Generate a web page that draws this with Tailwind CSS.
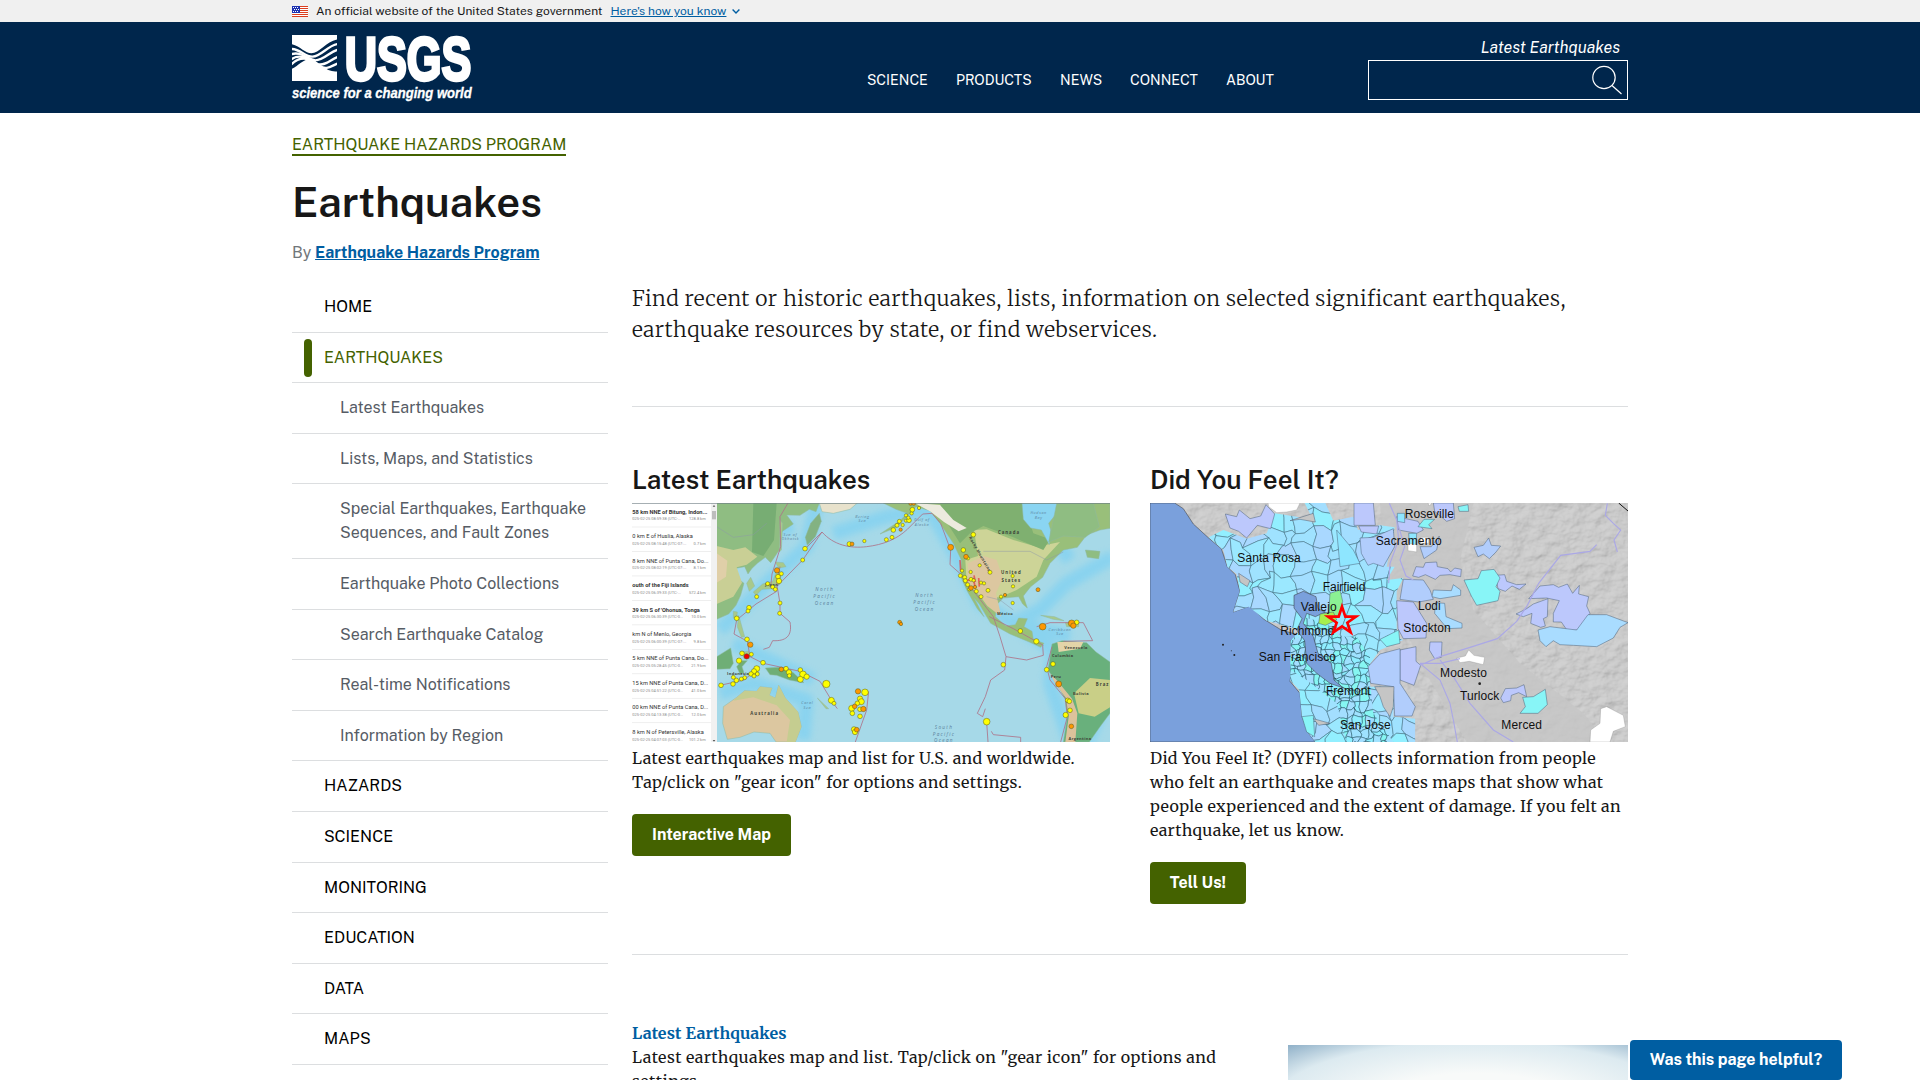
<!DOCTYPE html>
<html lang="en">
<head>
<meta charset="utf-8">
<title>Earthquakes | U.S. Geological Survey</title>
<script src="https://cdn.jsdelivr.net/npm/@tailwindcss/browser@4"></script>
</head>
<body class="h-[1080px] overflow-hidden bg-white font-['Public_Sans',Inter,sans-serif] text-[16px] leading-6 text-[#171717]">

<div class="h-[22px] bg-[#f0f0f0]">
  <div class="mx-auto flex h-full w-[1336px] items-center text-[12px] leading-[22px]">
    <svg class="h-[11px] w-4" viewBox="0 0 16 11"><rect width="16" height="11" fill="#fff"/><path d="M0 .5h16M0 2.5h16M0 4.5h16M0 6.5h16M0 8.5h16M0 10.5h16" stroke="#db3e1f"/><rect width="8" height="7" fill="#1e33b1"/><path d="M1 1.5h6M2 3.5h5M1 5.5h6" stroke="#fff" stroke-dasharray="1 1"/></svg>
    <span class="ml-2">An official website of the United States government</span>
    <a class="ml-2 text-[#005ea2] underline">Here's how you know</a>
    <svg class="ml-1.5 h-2 w-2" viewBox="0 0 8 8" fill="none" stroke="#005ea2" stroke-width="1.4"><path d="M.6 2.6 4 6l3.4-3.4"/></svg>
  </div>
</div>

<header class="h-[91px] bg-[#00264c] text-white">
  <div class="mx-auto flex h-full w-[1336px]">
    <svg class="mt-3 h-[68px] w-[181px] shrink-0 overflow-visible" viewBox="36 102 543 204">
      <clipPath id="mark"><rect x="36" y="105" width="135" height="138"/></clipPath>
      <g clip-path="url(#mark)">
        <rect x="36" y="105" width="135" height="138" fill="#fff"/>
        <path d="M34 132C60 138 76 160 94 160 118 160 140 122 174 118L174 214C140 220 118 186 92 178 70 176 56 198 34 207Z" fill="#00264c"/>
        <g fill="none" stroke="#fff" stroke-width="7">
          <path d="M34 147C62 147 76 172 98 170 124 168 144 136 174 132"/>
          <path d="M34 163C62 152 84 180 106 181 132 181 150 154 174 149"/>
          <path d="M34 178C60 160 84 176 112 192 136 200 154 176 174 171"/>
          <path d="M34 193C60 168 88 170 118 197 140 214 156 196 174 190"/>
        </g>
      </g>
      <text x="194" y="239" fill="#fff" stroke="#fff" stroke-width="10" font-family="Liberation Sans, sans-serif" font-weight="700" font-size="186" textLength="380" lengthAdjust="spacingAndGlyphs">USGS</text>
      <text x="36" y="293" fill="#fff" stroke="#fff" stroke-width="1" font-family="Liberation Sans, sans-serif" font-weight="700" font-style="italic" font-size="45" textLength="539" lengthAdjust="spacingAndGlyphs">science for a changing world</text>
    </svg>
    <nav class="ml-[394px] flex gap-7 pt-[46px] text-[14.1px] leading-6">
      <a class="w-[61px]">SCIENCE</a><a class="w-[76px]">PRODUCTS</a><a class="w-[42px]">NEWS</a><a class="w-[68px]">CONNECT</a><a>ABOUT</a>
    </nav>
    <div class="ml-auto w-[260px] pt-[14px]">
      <div class="pr-2 text-right text-[16px] leading-6 italic">Latest Earthquakes</div>
      <div class="flex h-10 justify-end border border-white pt-1 pr-[5px]">
        <svg class="h-[30px] w-[30px]" viewBox="0 0 30 30" fill="none" stroke="#fff" stroke-width="1.2"><circle cx="12" cy="12.5" r="11.2"/><path d="m20 20.500 9.500 8.500"/></svg>
      </div>
    </div>
  </div>
</header>

<main class="mx-auto w-[1336px]">
  <div class="pt-5"><a class="inline-block h-[23px] border-b-2 border-[#446200] text-[#446200]">EARTHQUAKE HAZARDS PROGRAM</a></div>
  <h1 class="mt-4 h-[58px] text-[42px] leading-[58px] font-semibold">Earthquakes</h1>
  <p class="mt-2.5 text-[#71767a]">By <a class="font-bold text-[#005ea2] underline">Earthquake Hazards Program</a></p>

  <div class="mt-[17px] flex gap-6">
    <ul class="w-[316px] shrink-0 text-black">
      <li class="h-[50.6px] border-b border-[#dcdee0] py-[13px] pl-8">HOME</li>
      <li class="flex h-[50.6px] border-b border-[#dcdee0] pl-3 text-[#446200]"><span class="mt-1.5 mr-3 h-[38px] w-2 rounded-full bg-[#446200]"></span><span class="py-[13px]">EARTHQUAKES</span></li>
      <li class="h-[50.6px] border-b border-[#dcdee0] py-[13px] pl-12 text-[#565c65]">Latest Earthquakes</li>
      <li class="h-[50.6px] border-b border-[#dcdee0] py-[13px] pl-12 text-[#565c65]">Lists, Maps, and Statistics</li>
      <li class="h-[74.600px] border-b border-[#dcdee0] py-[13px] pl-12 text-[#565c65]">Special Earthquakes, Earthquake<br>Sequences, and Fault Zones</li>
      <li class="h-[50.6px] border-b border-[#dcdee0] py-[13px] pl-12 text-[#565c65]">Earthquake Photo Collections</li>
      <li class="h-[50.6px] border-b border-[#dcdee0] py-[13px] pl-12 text-[#565c65]">Search Earthquake Catalog</li>
      <li class="h-[50.6px] border-b border-[#dcdee0] py-[13px] pl-12 text-[#565c65]">Real-time Notifications</li>
      <li class="h-[50.6px] border-b border-[#dcdee0] py-[13px] pl-12 text-[#565c65]">Information by Region</li>
      <li class="h-[50.6px] border-b border-[#dcdee0] py-[13px] pl-8">HAZARDS</li>
      <li class="h-[50.6px] border-b border-[#dcdee0] py-[13px] pl-8">SCIENCE</li>
      <li class="h-[50.6px] border-b border-[#dcdee0] py-[13px] pl-8">MONITORING</li>
      <li class="h-[50.6px] border-b border-[#dcdee0] py-[13px] pl-8">EDUCATION</li>
      <li class="h-[50.6px] border-b border-[#dcdee0] py-[13px] pl-8">DATA</li>
      <li class="h-[50.6px] border-b border-[#dcdee0] py-[13px] pl-8">MAPS</li>
    </ul>

    <div class="w-[996px] shrink-0 pt-px font-['Merriweather','Noto_Serif','DejaVu_Serif_Condensed',serif]">
      <p class="h-[124px] border-b border-[#dcdee0] text-[21.12px] leading-[31px] font-light tracking-[0.46px] whitespace-nowrap">Find recent or historic earthquakes, lists, information on selected significant earthquakes,<br>earthquake resources by state, or find webservices.</p>

      <div class="flex h-[548px] gap-10 border-b border-[#dcdee0] pt-[56px]">
        <section class="w-[478px]">
          <h2 class="h-10 font-['Public_Sans',Inter,sans-serif] text-[26px] leading-[34px] font-semibold">Latest Earthquakes</h2>
          <svg id="quakes" class="block h-[239px] w-[478px]" viewBox="36 159 1434 717" preserveAspectRatio="none">
            <defs><filter id="soft"><feGaussianBlur stdDeviation="9"/></filter></defs>
            <rect x="36" y="159" width="1434" height="717" fill="#a6d9e8"/>
            <g fill="none" stroke="#83d2f1" stroke-width="42" opacity=".8" filter="url(#soft)" stroke-linejoin="round">
              <path d="M590 160 560 290 450 390 350 490 300 540M460 240 520 230M640 250 800 200 930 180 1010 320 1080 460 1220 545 1300 600 1290 700 1350 876M1480 320 1340 400 1260 480 1180 520 1350 560M300 730 400 700 560 750 550 870M340 580 470 640 580 690M1240 160 1290 250 1350 330M1480 700 1400 876"/>
            </g>
            <g stroke="#8fb9a0" stroke-width="1.500">
              <path fill="#8fbd82" d="M290 159H598L588 185 568 178 540 196 500 195 520 222 484 246 478 300 452 338 436 322 412 340 395 356 384 372 374 350 342 356 352 384 372 400 362 436 348 466 326 492 290 508Z"/>
              <path fill="#c9cf95" stroke="none" d="M290 288 340 300 376 292 412 320 380 344 350 352 366 398 340 440 290 462Z"/>
              <path fill="#e0cfa8" stroke="none" d="M290 310 322 332 318 380 290 398Z"/>
              <path fill="#77ad73" stroke="none" d="M400 159 470 159 462 270 430 318 396 306Z"/>
              <path fill="#e8e2cc" d="M598 159 606 185 640 190 690 178 712 159Z"/>
              <path fill="#83b282" d="M598 190 604 214 586 260 562 286 556 262 572 220Z"/>
              <path fill="#a8c98b" d="M480 210 488 220 484 300 478 306ZM466 336 490 338 498 350 476 354ZM470 362 482 380 478 404 452 416 426 418 408 436 400 426 428 402 458 394ZM392 382 404 408 388 424 380 400ZM340 484 352 486 350 506 340 504Z"/>
              <path fill="#99bf7a" d="M790 159H1470V235L1440 240 1400 255 1372 292 1330 300 1290 340 1268 382 1232 410 1210 438 1222 474 1208 462 1196 440 1150 444 1130 464 1126 500 1158 528 1186 524 1196 504 1222 506 1212 530 1236 544 1240 568 1272 580 1262 592 1228 576 1170 552 1112 520 1078 462 1062 444 1092 500 1072 476 1042 424 1022 380 1024 330 1000 280 960 220 930 182 888 170 870 190 830 232 780 252 840 212 862 190 828 178Z"/>
              <path fill="#cdd497" stroke="none" d="M1062 240 1100 238 1180 270 1250 290 1320 276 1270 330 1250 380 1190 420 1140 442 1086 444 1040 400 1036 330 1074 318Z"/>
              <path fill="#dcc7a0" stroke="none" d="M1044 340 1090 318 1130 330 1148 384 1128 430 1144 500 1102 468 1074 430 1044 400Z"/>
              <path fill="#7fb070" stroke="none" d="M960 159H1210L1240 250 1290 268 1270 300 1180 262 1090 228 1050 250 1020 280 970 200Z"/>
              <path fill="#eceade" stroke="none" d="M884 159 960 165 1000 210 1040 234 1016 244 972 216 930 184ZM1310 166 1340 178 1350 210 1330 224Z"/>
              <path fill="#8ad5f2" d="M1206 160 1210 208 1232 234 1264 240 1288 284 1292 240 1286 220 1310 190 1316 160Z"/>
              <path fill="#8fbd82" d="M1310 160 1420 160 1438 230 1396 262 1330 258 1286 276 1298 220ZM1396 300 1440 304 1436 326 1402 322Z"/>
              <path fill="#a8c98b" d="M1262 496 1304 500 1332 512 1300 508ZM1336 518 1376 518 1376 530 1340 530Z"/>
              <path fill="#69b07c" d="M1296 582 1326 572 1400 578 1428 606 1470 636V790L1440 830 1408 876H1330L1342 800 1336 748 1310 700 1284 660Z"/>
              <path fill="#c9cf87" stroke="none" d="M1410 684 1470 690V772L1424 800 1376 790 1362 730Z"/>
              <path fill="#dcc29b" stroke="none" d="M1290 670 1310 690 1356 746 1372 790 1366 876H1336L1346 800 1338 744 1306 702Z"/>
              <path fill="#e3d4a8" stroke="none" d="M1312 576 1390 576 1380 596 1316 606Z"/>
              <path fill="#6fae76" d="M290 620 332 594 340 640 330 656 290 658ZM436 654 480 652 520 668 552 698 508 690 470 676 450 674ZM350 650 364 632 382 632 366 650 372 668 360 672Z"/>
              <path fill="#a8c98b" d="M356 496 374 560 364 562 352 530ZM366 606 386 604 388 626 372 626ZM592 744 626 776 618 776Z"/>
              <path fill="#dcc7a0" d="M310 770 350 742 374 722 410 724 420 710 456 714 448 736 466 744 476 706 496 744 534 786 544 830 526 876H468L450 850 402 846 360 862 322 868 308 820Z"/>
              <path fill="#c5cd90" stroke="none" d="M374 722 410 724 420 710 456 714 448 736 466 744 476 706 496 744 534 786 544 830 526 876H500L510 810 470 766 400 742 340 752Z"/>
            </g>
            <g fill="none" stroke="#8d98a8" stroke-width="2" opacity=".7"><path d="M1090 304H1230L1280 330 1330 306M1100 440 1140 450 1180 480M290 230 340 262 400 254 440 220"/></g>
            <g fill="none" stroke="#ad7288" stroke-width="2.500">
              <path d="M504 159 480 200 482 290 456 372 452 412M556 296 606 246C640 285 690 296 740 290S830 268 862 238L908 192 936 190 962 220 992 300 990 344 1022 372 1066 430 1120 500 1140 560 1158 620 1154 660 1112 690 1096 740 1072 790 1088 800 1096 776M1158 620 1220 630 1270 616 1268 586M1108 500 1180 536 1270 586M1250 530 1290 518 1390 518 1418 572 1330 574M1296 590 1280 650 1290 690 1336 746 1342 800 1322 876M606 246 548 330 470 410M480 350 470 400 480 460 480 490 510 516C518 560 496 574 458 572L448 592 430 598M470 424 408 462 350 510 342 552 382 574 390 620 430 640 540 664 600 694 640 760 652 776M300 706 372 690 420 650M746 724 740 780 706 876M1100 816 1104 876M1114 844 1120 854 1202 862V876"/>
              <path stroke="#e23a3a" stroke-width="5" d="M1020 330 1022 364M1040 392 1060 386 1066 414M1062 376 1066 396M1076 384 1078 410" opacity=".7"/>
            </g>
            <g font-family="Open Sans, sans-serif" font-size="14" fill="#5b7f9b" text-anchor="middle" letter-spacing="4" font-style="italic">
              <text x="614" y="424">North</text><text x="614" y="445">Pacific</text><text x="614" y="466">Ocean</text>
              <text x="914" y="441">North</text><text x="914" y="462">Pacific</text><text x="914" y="483">Ocean</text>
              <text x="972" y="838">South</text><text x="972" y="858">Pacific</text><text x="972" y="876">Ocean</text>
              <g font-size="11" letter-spacing="2"><text x="727" y="203">Bering</text><text x="727" y="217">Sea</text><text x="511" y="258">Sea of</text><text x="511" y="271">Okhotsk</text><text x="906" y="214">Gulf of</text><text x="906" y="228">Alaska</text><text x="1256" y="193">Hudson</text><text x="1256" y="207">Bay</text><text x="1320" y="543">Caribbean</text><text x="1320" y="556">Sea</text><text x="562" y="763">Coral</text><text x="562" y="777">Sea</text></g>
            </g>
            <g font-family="Open Sans, sans-serif" font-size="13" font-weight="700" fill="#3d4438" text-anchor="middle" letter-spacing="3">
              <text x="1167" y="252">Canada</text><text x="1174" y="372">United</text><text x="1174" y="396">States</text><text x="434" y="795">Australia</text><text x="1448" y="707">Braz</text>
              <g letter-spacing="1" font-size="12"><text x="1155" y="496">México</text><text x="1368" y="596">Venezuela</text><text x="1328" y="622">Colombia</text><text x="1308" y="683">Peru</text><text x="1383" y="736">Bolivia</text><text x="1380" y="870">Argentina</text><text x="355" y="676">Indonesia</text><text x="455" y="408">Japan</text><text transform="translate(1076 314) rotate(60)">Rocky Mountains</text></g>
            </g>
            <g id="dots" stroke="#555a20" stroke-width="1.500"></g>
            <rect x="36" y="159" width="238" height="717" fill="#fff"/><rect x="273" y="159" width="18" height="717" fill="#f1f1f1"/><rect x="276" y="183" width="12" height="25" fill="#bdbdbd"/><path d="m278 170 4-5 4 5ZM278 870l4 5 4-5Z" fill="#555"/>
            <g id="rows" font-family="Roboto, sans-serif"></g>
            <rect x="36" y="159" width="1434" height="3" fill="#6b7a80" opacity=".6"/>
          </svg>
          <p class="mt-1 whitespace-nowrap tracking-[0.35px]">Latest earthquakes map and list for U.S. and worldwide.<br>Tap/click on "gear icon" for options and settings.</p>
          <a class="mt-5 inline-flex h-[42px] w-[159px] items-center justify-center rounded bg-[#446200] font-['Public_Sans',Inter,sans-serif] font-bold text-white">Interactive Map</a>
        </section>

        <section class="w-[478px]">
          <h2 class="h-10 font-['Public_Sans',Inter,sans-serif] text-[26px] leading-[34px] font-semibold">Did You Feel It?</h2>
          <svg class="block h-[239px] w-[478px]" viewBox="30 159 1434 717" preserveAspectRatio="none">
            <defs>
              <filter id="relief" x="0" y="0" width="100%" height="100%"><feTurbulence type="fractalNoise" baseFrequency=".022 .03" numOctaves="4" seed="8"/><feDiffuseLighting surfaceScale="9" lighting-color="#e4e4e4"><feDistantLight azimuth="225" elevation="58"/></feDiffuseLighting></filter>
              <clipPath id="felt"><path d="M206 262 250 240 320 266 380 250 404 190 470 200 524 220 494 159H556L580 212 640 200 654 240 720 226 764 232 752 290 740 350 764 350 740 390 790 384 770 424 770 560 790 570 720 600 684 650 690 710 764 710 760 800 826 806V876H526L506 850 486 800 478 720 450 690 452 572 480 540 380 512 326 470 280 486 300 424 290 372 262 350 250 300Z"/></clipPath>
              <clipPath id="dense"><path d="M486 500 560 520 600 560 650 560 690 620 690 700 700 790 760 876H620L590 760 500 690 452 660 452 572 486 560Z"/></clipPath>
            </defs>
            <rect x="30" y="159" width="1434" height="717" fill="#c5c5c5"/>
            <rect x="30" y="159" width="1434" height="717" filter="url(#relief)" opacity=".4"/>
            <path fill="#c6c6c6" opacity=".8" d="M720 159H1000L960 330 1000 480 1140 640 1330 790 1400 876H980L840 640 740 400Z"/>
            <path d="M30 159H104L130 176 160 222 206 264 244 296 262 350 286 374 300 424 280 486 330 468 372 508 424 540 480 556 452 572 456 650 450 694 480 730 486 800 506 850 526 876H30Z" fill="#7aa0dc" stroke="#333" stroke-width="1.500"/>
            <g clip-path="url(#felt)"><g id="cells" stroke="#3b6678" stroke-width="1.500"></g></g>
            <g clip-path="url(#dense)"><g id="small" stroke="#25505e" stroke-width="1.500"></g></g>
            <g fill="#7aa0dc" stroke="#333" stroke-width="1.500">
              <path d="M462 436 490 424 528 440 534 476 556 486 526 500 500 490 490 520 520 560 534 610 574 640 582 690 610 714 570 700 530 670 500 640 494 572 470 540 486 506 462 474Z"/>
            </g>
            <g stroke="#4a6078" stroke-width="1.500">
              <path fill="#bcc8fc" d="M256 192 290 200 298 180 330 206 362 198 378 164 404 192 392 236 352 226 320 264 296 244 270 234ZM642 159H700L706 226 642 226ZM656 228 716 228 710 252 664 246ZM770 200 834 214 850 240 830 250 776 240ZM880 159 940 159 944 206 920 214 884 184ZM818 378 828 350 850 352 856 338 890 336 892 350 924 356 932 366 944 354 964 358 962 380 930 374 900 376 886 388 856 374 836 382ZM770 452 820 456 860 520 858 564 790 566 774 536ZM780 600 828 590 828 634 842 646 822 706 780 690ZM870 576 906 576 904 622 884 626 868 600ZM1066 376 1094 374 1100 394 1130 404 1158 402 1138 418 1116 408 1096 424 1074 416ZM1166 446 1200 408 1240 404 1256 412 1282 402 1298 430 1318 406 1316 432 1346 440 1340 468 1350 490 1318 540 1282 542 1264 516 1240 516 1240 490 1258 452 1220 444ZM1128 492 1160 476 1180 462 1224 446 1222 500 1210 506 1216 528 1202 532 1172 520 1176 490 1150 500ZM1082 744 1096 716 1130 714 1152 704 1160 740 1136 728 1114 736 1112 752 1090 758Z"/>
              <path fill="#b1cdfc" d="M660 264 700 262 760 236 764 290 730 350 700 340 684 346 664 310ZM790 388 850 390 870 420 880 448 836 456 780 448ZM840 290 874 290 898 258 890 300 852 326ZM1002 292 1030 286 1046 264 1054 286 1082 288 1068 306 1048 326 1030 312 1014 320ZM684 650 720 612 780 596V700L826 770 816 798 764 798 760 710 692 700Z"/>
              <path fill="#a9dcff" d="M880 420 934 422 940 404 962 420V436L900 446 876 440ZM886 458 914 460 918 500 966 520V534L922 536 884 490ZM1194 540 1230 530 1310 540 1344 494 1400 494 1464 518 1440 532 1420 564 1370 590 1300 586 1260 584 1240 572 1218 590 1200 572Z"/>
              <path fill="#88f5f7" d="M972 390 1014 386 1024 362 1062 358 1080 384 1068 410 1080 424 1074 452 1010 466 994 438ZM954 170 984 164 986 184 958 184ZM1148 742 1180 740 1216 718 1222 764 1194 790 1140 790 1156 770ZM834 230 852 208 884 208 866 224 876 236ZM720 568 776 540 780 580 740 590ZM486 800 520 796 524 860 500 846Z"/>
              <path fill="#8ee6ff" d="M772 190 794 190 794 218 772 214ZM806 250 830 250 828 290 808 286ZM590 240 640 300 660 340 600 350Z"/>
              <path fill="#8bf193" d="M570 430 600 420 608 454 596 500 566 490Z"/><path fill="#a7f04e" d="M540 492 580 486 590 510 556 526 536 520Z"/>
              <path fill="#c5c5c5" d="M704 710 762 710 760 770 750 800 730 770 720 740ZM520 806 570 820 536 826ZM296 370 330 392 322 410 300 396ZM450 212 520 190 526 216 480 208Z"/>
            </g>
            <path fill="#fff" d="M384 159H480L470 180 440 186 410 188 386 170ZM804 280 830 284V306L804 302ZM842 262 866 262V280H842ZM950 624 976 618 986 600 1002 616 1034 622 1030 644 988 634 960 638ZM1350 876 1352 840 1380 820 1382 776 1400 770 1450 796 1456 830 1420 844 1410 876ZM864 159 876 159 868 168Z" stroke="#888"/>
            <g fill="none" stroke="#aba8e6" stroke-width="3.500"><path d="M748 160 770 210 776 270 750 340 746 400M776 230 794 290 780 330 798 378 820 390M1402 160 1396 196 1420 220 1442 240 1422 270 1432 306M1370 284 1350 304 1262 316 1196 400 1162 466 1130 514 1072 566 990 592 900 620 840 646M840 640 900 690 930 760 940 810 952 876M900 630 940 680 990 760 1060 840 1120 876M840 640 900 640 960 626"/></g>
            <path d="m1436 159 28 24" stroke="#111" stroke-width="3"/>
            <g fill="#222"><circle cx="249" cy="584" r="3"/><circle cx="283" cy="615" r="3"/><circle cx="274" cy="602" r="1.500"/><circle cx="1019" cy="701" r="4"/></g>
            <g font-family="Liberation Sans, sans-serif" font-size="36" fill="#111">
              <text x="794" y="203" textLength="148">Roseville</text><text x="707" y="286" textLength="198">Sacramento</text><text x="292" y="337" textLength="190">Santa Rosa</text><text x="548" y="423" textLength="128">Fairfield</text><text x="482" y="484" textLength="108">Vallejo</text><text x="834" y="480" textLength="68">Lodi</text><text x="421" y="555" textLength="162">Richmond</text><text x="790" y="545" textLength="142">Stockton</text><text x="356" y="632" textLength="232">San Francisco</text><text x="900" y="680" textLength="141">Modesto</text><text x="558" y="736" textLength="134">Fremont</text><text x="960" y="749" textLength="118">Turlock</text><text x="600" y="837" textLength="152">San Jose</text><text x="1084" y="836" textLength="122">Merced</text>
            </g>
            <path d="M606 470 616 500 648 500 622 518 632 547 606 529 580 547 590 518 564 500 596 500Z" fill="none" stroke="#f00" stroke-width="8"/>
          </svg>
          <p class="mt-1 whitespace-nowrap tracking-[0.35px]">Did You Feel It? (DYFI) collects information from people<br>who felt an earthquake and creates maps that show what<br>people experienced and the extent of damage. If you felt an<br>earthquake, let us know.</p>
          <a class="mt-5 inline-flex h-[42px] w-24 items-center justify-center rounded bg-[#446200] font-['Public_Sans',Inter,sans-serif] font-bold text-white">Tell Us!</a>
        </section>
      </div>

      <div class="flex justify-between pt-[66px]">
        <p class="whitespace-nowrap tracking-[0.4px]"><a class="font-bold tracking-[0.1px] text-[#005ea2]">Latest Earthquakes</a><br>Latest earthquakes map and list. Tap/click on "gear icon" for options and<br>settings.</p>
        <div class="mt-6 h-20 w-[340px] bg-[radial-gradient(ellipse_at_55%_70%,#f8faf9_35%,#dceaf0_75%,#8fb0c8_100%)]"></div>
      </div>
    </div>
  </div>
</main>

<a class="fixed bottom-0 left-[1630px] flex h-10 w-[212px] items-center justify-center rounded bg-[#005ea2] font-bold text-white">Was this page helpful?</a>

<script>
const NS = 'http://www.w3.org/2000/svg';
function add(parent, tag, attrs, text) {
  const el = document.createElementNS(NS, tag);
  for (const k in attrs) el.setAttribute(k, attrs[k]);
  if (text) el.textContent = text;
  parent.appendChild(el);
}

// Event list at the left of the world map
const rows = [
  ['58 km NNE of Bitung, Indon...', '025-02-25 08:59:38 (UTC-...', '128.8 km', 1],
  ['0 km E of Huslia, Alaska', '025-02-25 08:15:48 (UTC-07:...', '0.7 km', 0],
  ['8 km NNE of Punta Cana, Do...', '025-02-25 08:02:19 (UTC-07:...', '8.1 km', 0],
  ['outh of the Fiji Islands', '025-02-25 06:39:33 (UTC-...', '572.4 km', 1],
  ["39 km S of 'Ohonua, Tonga", '025-02-25 06:30:39 (UTC-0...', '10.0 km', 1],
  [' km N of Menlo, Georgia', '025-02-25 06:00:39 (UTC-07:...', '9.8 km', 0],
  ['5 km NNE of Punta Cana, Do...', '025-02-25 05:28:45 (UTC-0...', '21.9 km', 0],
  ['15 km NNE of Punta Cana, D...', '025-02-25 04:51:22 (UTC-0...', '41.0 km', 0],
  ['00 km NNE of Punta Cana, D...', '025-02-25 04:13:38 (UTC-0...', '12.0 km', 0],
  ['8 km N of Petersville, Alaska', '025-02-25 04:07:03 (UTC-0...', '101.2 km', 0]
];
const list = document.getElementById('rows');
rows.forEach((r, i) => {
  const y = 191 + i * 73.4;
  add(list, 'text', { x: 37, y, 'font-size': 17, 'font-weight': r[3] ? 700 : 400, fill: '#333' }, r[0]);
  add(list, 'text', { x: 37, y: y + 20, 'font-size': 12, fill: '#888' }, r[1]);
  add(list, 'text', { x: 257, y: y + 20, 'font-size': 12, fill: '#888', 'text-anchor': 'end' }, r[2]);
  add(list, 'rect', { x: 36, y: y + 39, width: 237, height: 2, fill: '#e6e6e6' });
});

// Earthquake markers: x, y, radius
const yellow = [[555,296,7],[548,330,6],[484,371,6],[474,380,7],[477,393,8],[443,401,6],[458,411,6],[466,418,6],[410,440,6],[387,473,7],[384,483,6],[350,505,7],[480,459,6],[479,490,6],[381,568,7],[366,610,7],[394,613,6],[357,632,8],[429,638,7],[410,656,9],[402,664,8],[393,672,7],[412,672,6],[402,678,6],[374,683,6],[364,687,6],[349,691,7],[340,682,6],[339,702,7],[303,706,7],[498,656,7],[507,667,8],[508,677,6],[541,660,7],[549,673,10],[541,688,9],[560,680,8],[619,702,11],[634,751,9],[642,760,6],[735,727,10],[720,746,8],[724,755,9],[712,760,7],[695,775,9],[720,778,7],[697,790,7],[720,799,7],[702,838,8],[705,846,8],[688,282,7],[733,273,5],[799,269,6],[816,262,6],[820,240,7],[831,226,6],[838,214,6],[848,225,5],[858,196,5],[858,212,5],[867,211,7],[865,203,5],[875,190,5],[877,179,7],[897,174,5],[1060,254,7],[1030,300,7],[1044,325,5],[1079,346,5],[1110,367,6],[1178,378,5],[1179,409,5],[1178,459,5],[1104,421,6],[1083,398,5],[1092,400,5],[1021,377,6],[1026,362,5],[1034,382,6],[1036,392,6],[1043,404,6],[1053,388,6],[1052,366,5],[1061,391,5],[1048,418,5],[1069,424,6],[1083,440,6],[1143,440,5],[1201,543,7],[1249,574,8],[1370,517,7],[1150,644,7],[1299,642,7],[1280,659,7],[1343,751,7],[1348,754,7],[1350,781,7],[1337,795,8],[1100,815,10]];
const orange = [[471,361,8],[391,584,8],[484,658,7],[696,282,6],[714,724,8],[704,769,7],[730,777,8],[710,839,7],[842,239,5],[872,160,6],[881,160,6],[992,292,9],[1038,320,7],[1053,414,7],[1065,411,5],[1155,435,5],[1254,419,6],[1268,530,10],[1355,520,10],[1360,527,8],[1316,702,9],[1354,829,7],[839,517,6],[843,522,5]];
const dots = document.getElementById('dots');
yellow.forEach(([cx, cy, r]) => add(dots, 'circle', { cx, cy, r, fill: '#ffff00' }));
orange.forEach(([cx, cy, r]) => add(dots, 'circle', { cx, cy, r, fill: '#ff9800' }));
add(dots, 'circle', { cx: 380, cy: 619, r: 8, fill: '#f00000' });

// Irregular reporting areas around the bay
function mesh(id, x0, y0, x1, y1, step, colors, seed) {
  const g = document.getElementById(id);
  const rnd = () => (seed = (seed * 16807) % 2147483647) / 2147483647;
  const nx = Math.ceil((x1 - x0) / step), ny = Math.ceil((y1 - y0) / step), p = [];
  const pt = (a, b) => [a + (rnd() - .5) * step * .9, b + (rnd() - .5) * step * .9];
  for (let j = 0; j <= ny; j++) { p[j] = []; for (let i = 0; i <= nx; i++) p[j][i] = pt(x0 + i * step, y0 + j * step); }
  const mid = (a, b) => [(a[0] + b[0]) / 2 + (rnd() - .5) * step * .5, (a[1] + b[1]) / 2 + (rnd() - .5) * step * .5];
  const h = p.map(r => r.slice(1).map((q, i) => mid(r[i], q)));
  const v = p.slice(1).map((r, j) => r.map((q, i) => mid(p[j][i], q)));
  for (let j = 0; j < ny; j++) for (let i = 0; i < nx; i++) {
    const pts = [p[j][i], h[j][i], p[j][i + 1], v[j][i + 1], p[j + 1][i + 1], h[j + 1][i], p[j + 1][i], v[j][i]];
    add(g, 'polygon', { points: pts.map(q => q.map(n => n.toFixed(1)).join()).join(' '), fill: colors[Math.floor(rnd() * colors.length)] });
  }
}
mesh('cells', 180, 140, 860, 900, 48, ['#9fe2ff', '#9be8ff', '#a3deff', '#92efff', '#a9d8ff', '#9be8ff'], 77);
mesh('small', 440, 480, 780, 900, 20, ['#8feeff', '#86f6f2', '#9fe2ff', '#a3deff'], 31);
</script>
</body>
</html>
